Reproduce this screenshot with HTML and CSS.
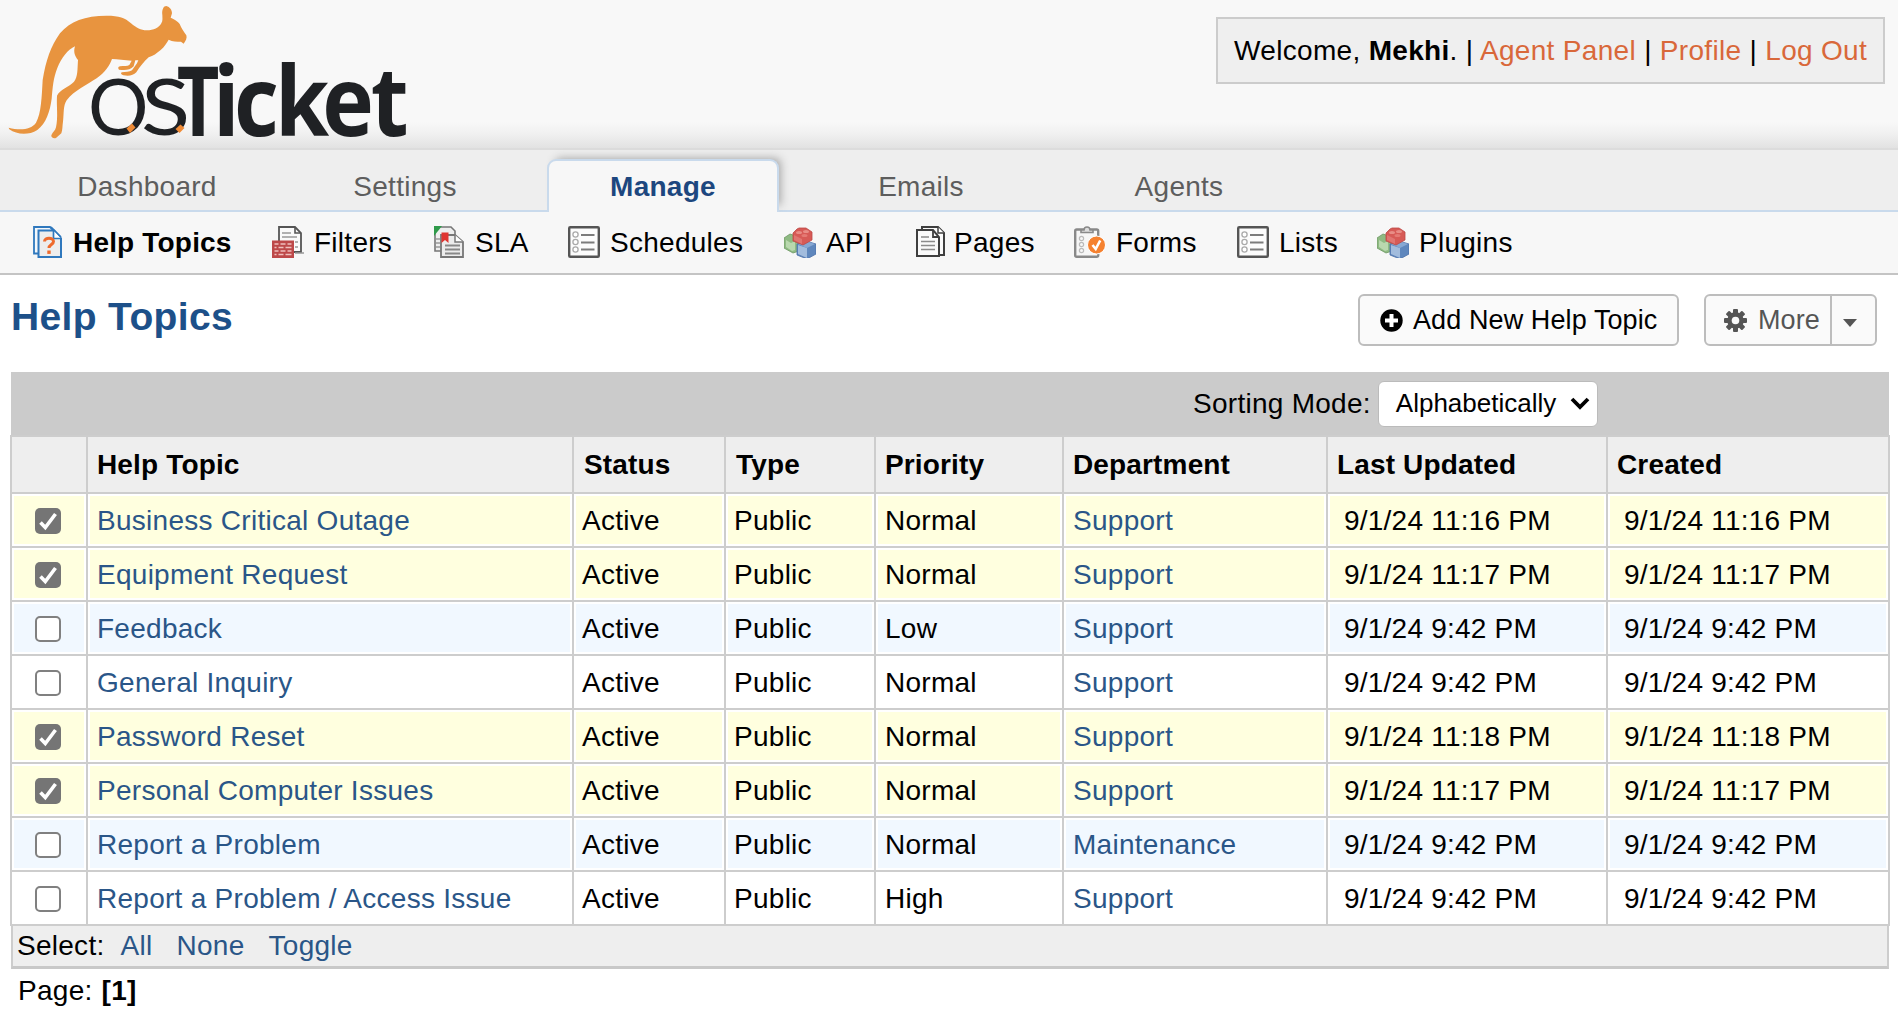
FILE: index.html
```html
<!DOCTYPE html>
<html lang="en">
<head>
<meta charset="utf-8">
<title>Help Topics</title>
<link rel="stylesheet" href="styles.css">
</head>
<body>
<svg class="defs" width="0" height="0" aria-hidden="true">
  <symbol id="i-list" viewBox="0 0 32 32">
    <rect x="1.2" y="1.2" width="29.6" height="29.6" rx="1" fill="#fcfcfc" stroke="#555" stroke-width="2.4"/>
    <g fill="#fff" stroke="#aaa" stroke-width="1.3"><circle cx="7.5" cy="8.5" r="2.6"/><circle cx="7.5" cy="16" r="2.6"/><circle cx="7.5" cy="23.500" r="2.6"/></g>
    <path d="M13 9h13.500M13 16.500h13.500M13 23.500h13.500" stroke="#7c7c7c" stroke-width="1.8"/>
  </symbol>
  <symbol id="i-bricks" viewBox="0 0 32 32">
    <path d="M0 12l6-4 9 3v14l-6 2-9-5z" fill="#8fba83" stroke="#6c9862" stroke-width=".8"/>
    <path d="M2 14l5 3 4-2v9l-3 1-6-4z" fill="#b9d8ae"/>
    <path d="M13 18l9-3 10 3v10l-9 5-10-4z" fill="#5f87bd" stroke="#4b70a7" stroke-width=".8"/>
    <path d="M14 19l9 3v10l-9-4z" fill="#a2bcdd"/><path d="M14 18l8-3 9 3-8 4z" fill="#87a8d3"/>
    <path d="M9 7l4-4 2-1h7l6 4v8l-9 5-10-4z" fill="#d75a56" stroke="#bd4946" stroke-width=".8"/>
    <path d="M10 9l8 4v5l-8-4z" fill="#e07571"/>
    <ellipse cx="15" cy="6.500" rx="3" ry="1.600" fill="#e88d86"/><ellipse cx="22" cy="5.500" rx="3" ry="1.600" fill="#e88d86"/><ellipse cx="20.500" cy="9.500" rx="3" ry="1.600" fill="#e47a74"/>
  </symbol>
  <symbol id="chk" viewBox="0 0 26 26"><path d="M5.500 14.500l4.800 5L20.500 6" fill="none" stroke="#fff" stroke-width="3.600"/></symbol>
</svg>

<header class="top">
  <svg class="logo" width="420" height="150" viewBox="0 0 420 150">
    <g transform="scale(.33333)">
      <path fill="#e8943f" d="M26 383C60 392 92 390 108 368C124 340 125 290 128 240C138 180 152 140 180 100C210 64 255 47 320 47C358 47 375 53 393 70C410 84 422 91 440 91C462 91 476 84 484 70C489 62 487 54 487 45C485 28 491 18 499 18C510 21 516 30 516 40L512 53C526 60 533 63 539 72C544 84 551 94 559 106C562 114 557 123 551 131L543 125C530 125 518 125 506 119C500 128 494 140 482 150C470 160 460 168 446 172C432 185 420 200 409 217C400 227 386 229 370 226C362 223 361 219 366 217C376 215 388 217 396 211L411 190L415 181L406 181L401 199C390 212 372 211 357 209C353 204 354 201 360 199C372 197 382 199 388 195L395 182C375 180 352 178 336 177C330 195 315 218 290 235C262 254 222 272 200 301C189 318 192 340 189 365C187 378 188 388 184 400L168 414C160 417 153 412 154 406C158 396 166 392 168 382C175 350 169 320 171 287C180 268 205 262 222 245C234 230 232 208 234 180C226 170 219 158 225 139C204 148 184 175 172 204C160 234 158 262 155 296C150 335 138 370 112 390C85 407 50 404 28 388Z"/>
    </g>
    <text class="wm-light" transform="scale(.97 1)" y="135.500" x="90.700">O</text>
    <text class="wm-light" transform="scale(1.16 1)" y="135.500" x="121.500">S</text>
    <text class="wm-bold" transform="scale(.76 1)" y="136.300" x="232.500">T</text>
    <text class="wm-bold" transform="scale(.9 1)" y="136.300" x="236.700 260 305.500 358 412">icket</text>
    <path d="M126.500 128.500l5.500-5 3.500 4-5.500 5.500z" fill="#f08b36"/>
    <path d="M175.500 129l5-4.500 4 3.500-5 5z" fill="#f08b36"/>
  </svg>
  <p class="welcome">Welcome, <strong>Mekhi</strong>. | <a href="#">Agent Panel</a> | <a href="#">Profile</a> | <a href="#">Log Out</a></p>
</header>

<nav class="tabs">
  <a href="#">Dashboard</a>
  <a href="#">Settings</a>
  <a href="#" class="active">Manage</a>
  <a href="#">Emails</a>
  <a href="#">Agents</a>
</nav>

<nav class="subnav">
  <a href="#" class="current">
    <svg width="32" height="32" viewBox="0 0 32 32"><path d="M6 27.500H2V1h16l3 3" fill="#f4f8fc" stroke="#2f78bd" stroke-width="1.800"/><path d="M6.500 4.500H22l7 8V31H6.500z" fill="#ededed" stroke="#2f78bd" stroke-width="2"/><path d="M21.500 4v8.500H29M19 1l10 10" fill="#fff" stroke="#2f78bd" stroke-width="1.700"/><path d="M12.500 15.500c0-4.500 9-4.500 9 0 0 3-4.500 3-4.500 6.500" fill="none" stroke="#ee6a2c" stroke-width="3"/><rect x="15.300" y="24.500" width="3.400" height="3.400" fill="#ee6a2c"/></svg>Help Topics</a>
  <a href="#">
    <svg width="32" height="32" viewBox="0 0 32 32"><path d="M7 1h16l6 6v19H7z" fill="#fafafa" stroke="#555" stroke-width="1.800"/><path d="M23 1v6h6" fill="none" stroke="#555" stroke-width="1.600"/><path d="M10 7h9M10 11h15M23 16h3M23 21h3M23 27h9" stroke="#999" stroke-width="1.500"/><rect x="0" y="14.500" width="22" height="17.500" fill="#bd4849"/><path d="M2.500 18h4m2 0h5m2 0h4M2.500 21.500h2m2 0h5m2 0h6M2.500 25h4m2 0h5m2 0h4M2.500 28.500h2m2 0h5m2 0h6" stroke="#f0bfbd" stroke-width="1.700"/></svg>Filters</a>
  <a href="#">
    <svg width="32" height="32" viewBox="0 0 32 32"><path d="M2 1h16l4 4v20H2z" fill="#eee" stroke="#777" stroke-width="1.600"/><path d="M1 0h8L1 10z" fill="#2f9a4a"/><path d="M3 13h4M3 17h4M3 21h4" stroke="#999" stroke-width="1.600"/><path d="M8 9h14l8 7v15H8z" fill="#ececec" stroke="#777" stroke-width="1.800"/><path d="M22 9v7h8" fill="#fff" stroke="#777" stroke-width="1.500"/><path d="M12 19.500h15M12 23.500h15M12 27.500h15" stroke="#888" stroke-width="1.800"/><path d="M8.500 6.500h7V17L12 14l-3.500 3z" fill="#df3430"/></svg>SLA</a>
  <a href="#"><svg width="32" height="32"><use href="#i-list"/></svg>Schedules</a>
  <a href="#"><svg width="32" height="32"><use href="#i-bricks"/></svg>API</a>
  <a href="#" class="pages">
    <svg width="32" height="32" viewBox="0 0 32 32"><path d="M6 4V1h16l6 6v22h-4" fill="#fafafa" stroke="#3f3f3f" stroke-width="2"/><path d="M22 1v6h6" fill="#fff" stroke="#3f3f3f" stroke-width="1.500"/><path d="M1 4h16l6 7v19H1z" fill="#fafafa" stroke="#3f3f3f" stroke-width="2"/><path d="M17 4v7h6" fill="none" stroke="#3f3f3f" stroke-width="1.800"/><path d="M5 11h8M5 15.500h14M5 19.500h14M5 23.500h14" stroke="#8b8b8b" stroke-width="1.600"/></svg>Pages</a>
  <a href="#">
    <svg width="32" height="32" viewBox="0 0 32 32"><rect x="1.200" y="3.500" width="23" height="27.300" rx="1.500" fill="#f6f6f6" stroke="#898989" stroke-width="2.400"/><path d="M7 6.500V4h3c0-4 6-4 6 0h3v2.500z" fill="#ddd" stroke="#898989" stroke-width="1.600"/><g fill="none" stroke="#bbb" stroke-width="1.200"><circle cx="7.500" cy="12.500" r="2.100"/><circle cx="7.500" cy="18.500" r="2.100"/><circle cx="7.500" cy="24.500" r="2.100"/></g><circle cx="22.500" cy="19" r="9" fill="#f5812f" stroke="#fff" stroke-width="1"/><path d="M18.500 19l3.200 4 4.500-8.500" fill="none" stroke="#fff" stroke-width="2.600"/></svg>Forms</a>
  <a href="#"><svg width="32" height="32"><use href="#i-list"/></svg>Lists</a>
  <a href="#"><svg width="32" height="32"><use href="#i-bricks"/></svg>Plugins</a>
</nav>

<main>
  <div class="heading">
    <h1>Help Topics</h1>
    <a href="#" class="btn add"><svg width="23" height="23" viewBox="0 0 23 23"><circle cx="11.500" cy="11.500" r="11.200" fill="#000"/><path d="M11.500 5v13M5 11.500h13" stroke="#fff" stroke-width="4"/></svg>Add New Help Topic</a>
    <div class="btn more">
      <span class="more-label"><svg width="23" height="23" viewBox="0 0 23 23"><g fill="#555"><circle cx="11.500" cy="11.500" r="8.300"/><rect x="9" y="0" width="5" height="23" rx="1"/><rect x="0" y="9" width="23" height="5" rx="1"/><g transform="rotate(45 11.500 11.500)"><rect x="9" y="0" width="5" height="23" rx="1"/><rect x="0" y="9" width="23" height="5" rx="1"/></g></g><circle cx="11.500" cy="11.500" r="3.800" fill="#fafafa"/></svg>More</span>
      <span class="more-caret"></span>
    </div>
  </div>

  <div class="sortbar">
    <span>Sorting Mode:</span>
    <div class="select">Alphabetically<svg width="20" height="14" viewBox="0 0 20 14"><path d="M2 3l8 8 8-8" fill="none" stroke="#000" stroke-width="3.800"/></svg></div>
  </div>
  <table>
    <colgroup><col class="c1"><col class="c2"><col class="c3"><col class="c4"><col class="c5"><col class="c6"><col class="c7"><col class="c8"></colgroup>
    <thead>
      <tr><th></th><th>Help Topic</th><th class="nudge">Status</th><th class="nudge">Type</th><th>Priority</th><th>Department</th><th>Last Updated</th><th>Created</th></tr>
    </thead>
    <tbody>
      <tr class="sel"><td><i class="cb on"><svg><use href="#chk"/></svg></i></td><td><a href="#">Business Critical Outage</a></td><td>Active</td><td>Public</td><td>Normal</td><td><a href="#">Support</a></td><td class="date">9/1/24 11:16 PM</td><td class="date">9/1/24 11:16 PM</td></tr>
      <tr class="sel"><td><i class="cb on"><svg><use href="#chk"/></svg></i></td><td><a href="#">Equipment Request</a></td><td>Active</td><td>Public</td><td>Normal</td><td><a href="#">Support</a></td><td class="date">9/1/24 11:17 PM</td><td class="date">9/1/24 11:17 PM</td></tr>
      <tr class="alt"><td><i class="cb"></i></td><td><a href="#">Feedback</a></td><td>Active</td><td>Public</td><td>Low</td><td><a href="#">Support</a></td><td class="date">9/1/24 9:42 PM</td><td class="date">9/1/24 9:42 PM</td></tr>
      <tr><td><i class="cb"></i></td><td><a href="#">General Inquiry</a></td><td>Active</td><td>Public</td><td>Normal</td><td><a href="#">Support</a></td><td class="date">9/1/24 9:42 PM</td><td class="date">9/1/24 9:42 PM</td></tr>
      <tr class="sel"><td><i class="cb on"><svg><use href="#chk"/></svg></i></td><td><a href="#">Password Reset</a></td><td>Active</td><td>Public</td><td>Normal</td><td><a href="#">Support</a></td><td class="date">9/1/24 11:18 PM</td><td class="date">9/1/24 11:18 PM</td></tr>
      <tr class="sel"><td><i class="cb on"><svg><use href="#chk"/></svg></i></td><td><a href="#">Personal Computer Issues</a></td><td>Active</td><td>Public</td><td>Normal</td><td><a href="#">Support</a></td><td class="date">9/1/24 11:17 PM</td><td class="date">9/1/24 11:17 PM</td></tr>
      <tr class="alt"><td><i class="cb"></i></td><td><a href="#">Report a Problem</a></td><td>Active</td><td>Public</td><td>Normal</td><td><a href="#">Maintenance</a></td><td class="date">9/1/24 9:42 PM</td><td class="date">9/1/24 9:42 PM</td></tr>
      <tr><td><i class="cb"></i></td><td><a href="#">Report a Problem / Access Issue</a></td><td>Active</td><td>Public</td><td>High</td><td><a href="#">Support</a></td><td class="date">9/1/24 9:42 PM</td><td class="date">9/1/24 9:42 PM</td></tr>
    </tbody>
  </table>
  <div class="selectbar">Select: <a href="#">All</a><a href="#">None</a><a href="#">Toggle</a></div>
  <div class="pager">Page: <strong>[1]</strong></div>
</main>
</body>
</html>
```
FILE: styles.css
```css
* { box-sizing: border-box; }
body {
  margin: 0;
  background: #fff;
  color: #000;
  font: 28px/32px "Liberation Sans", Arial, sans-serif;
  letter-spacing: .27px;
}
a { color: #2a5688; text-decoration: none; }
.defs { position: absolute; }

.top {
  display: flex;
  justify-content: space-between;
  align-items: flex-start;
  height: 150px;
  padding-right: 13px;
  background: linear-gradient(#f8f8f8 0, #f8f8f8 122px, #f0f0f0 134px, #e2e2e2 148px);
  border-bottom: 2px solid #dcdcdc;
}
.logo { display: block; overflow: visible; }
.wm-light { font: 400 78px Lato, sans-serif; fill: #1f2124; letter-spacing: 0; }
.wm-bold { font: 700 97px "Open Sans", sans-serif; fill: #1f2124; letter-spacing: 0; }
.welcome {
  margin: 17px 0 0;
  width: 669px;
  height: 67px;
  padding: 16px 0 0 16px;
  border: 2px solid #ccc;
  background: #efefef;
  white-space: nowrap;
  letter-spacing: .32px;
}
.welcome a { color: #d9683a; }

.tabs {
  display: flex;
  gap: 26px;
  height: 62px;
  padding: 9px 0 0 31px;
  background: #eee;
  box-shadow: inset 0 -2px #c9daec;
}
.tabs a {
  width: 232px;
  height: 53px;
  line-height: 56px;
  text-align: center;
  color: #5d5d5d;
}
.tabs a.active {
  border: 2px solid #c9daec;
  border-bottom: 0;
  border-radius: 9px 9px 0 0;
  background: #f7f7f7;
  color: #1d477f;
  font-weight: 700;
  line-height: 52px;
  box-shadow: 5px -4px 8px -3px #aaa;
  clip-path: inset(-12px -12px 0 -12px);
}

.subnav {
  display: grid;
  grid-template-columns: 240px 161px 135px 216px 128px 162px 163px 140px 170px;
  height: 63px;
  padding: 14px 0 0 32px;
  background: #f7f7f7;
  border-bottom: 2px solid #c4c4c4;
}
.subnav a { display: flex; gap: 10px; line-height: 34px; color: #000; white-space: nowrap; }
.subnav svg { flex: none; }
.subnav a.pages svg { margin-left: 4px; margin-right: -4px; }
.subnav .current { gap: 9px; font-weight: 700; letter-spacing: .18px; }

main { padding: 0 9px 0 11px; }
.heading { display: flex; height: 97px; padding: 19px 12px 0 0; }
h1 {
  margin: 1px auto 0 0;
  font-size: 39px;
  line-height: 44px;
  letter-spacing: .35px;
  color: #1d5089;
}
.btn {
  display: flex;
  align-items: center;
  height: 52px;
  border: 2px solid #bdbdbd;
  border-radius: 6px;
  background: #fafafa;
  font-size: 27px;
  letter-spacing: .1px;
  color: #000;
  white-space: nowrap;
}
.add { width: 321px; padding-left: 20px; gap: 10px; margin-right: 25px; }
.more { width: 173px; color: #555; }
.more-label {
  display: flex;
  align-items: center;
  gap: 11px;
  width: 126px;
  height: 48px;
  padding-left: 18px;
  border-right: 2px solid #bdbdbd;
}
.more-caret {
  margin: 5px 0 0 11px;
  border: 7.500px solid transparent;
  border-top: 8px solid #555;
  border-bottom: 0;
}

.sortbar {
  display: flex;
  align-items: center;
  height: 63px;
  padding: 1px 0 0 1182px;
  background: #cbcbcb;
}
.select {
  display: flex;
  align-items: center;
  justify-content: space-between;
  width: 220px;
  height: 46px;
  margin-left: 7px;
  padding: 0 7px 2px 17px;
  border: 1px solid #bbb;
  border-radius: 6px;
  background: #fff;
  font-size: 26px;
  letter-spacing: 0;
}

table {
  width: 1879px;
  margin-left: -1px;
  table-layout: fixed;
  border-collapse: collapse;
}
.c1 { width: 76px; } .c2 { width: 486px; } .c3 { width: 152px; } .c4 { width: 150px; }
.c5 { width: 188px; } .c6 { width: 264px; } .c7 { width: 280px; } .c8 { width: 282px; }
th, td { height: 54px; padding: 0 0 0 9px; border: 2px solid #cdcdcd; text-align: left; white-space: nowrap; }
th { height: 57px; background: #eee; letter-spacing: .15px; }
th.nudge { padding-left: 10px; }
td { padding-top: 2px; background: #fff; box-shadow: inset 0 0 0 2px #fff; }
td:nth-child(3), td:nth-child(4) { padding-left: 8px; }
td.date { padding-left: 16px; letter-spacing: .22px; }
td:first-child { padding-left: 23px; }
.sel td { background: #ffffdf; }
.alt td { background: #f1f8ff; }

.cb {
  display: block;
  width: 26px;
  height: 26px;
  border: 2px solid #808080;
  border-radius: 5px;
  background: #fff;
}
.cb.on { border: 0; background: #757575; }
.cb svg { display: block; width: 26px; height: 26px; }

.selectbar {
  width: 1878px;
  height: 43px;
  padding: 4px 0 0 4px;
  border: 2px solid #cdcdcd;
  border-top: 0;
  border-bottom: 3px solid #c8c8c8;
  background: #eee;
}
.selectbar a { margin-left: 8px; margin-right: 16px; }
.pager { padding: 6px 0 0 7px; }
.pager strong { margin-left: 1px; }
```
